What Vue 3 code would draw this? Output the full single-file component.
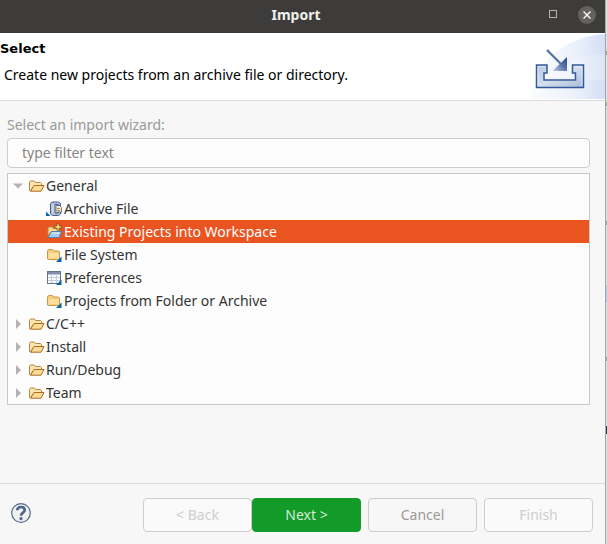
<script setup>
import { ref } from 'vue'

const filter = ref('')
const selected = ref('Existing Projects into Workspace')
const rows = [
  { label: 'General', icon: 'open', level: 0, expanded: true },
  { label: 'Archive File', icon: 'archive', level: 1 },
  { label: 'Existing Projects into Workspace', icon: 'project', level: 1 },
  { label: 'File System', icon: 'folder', level: 1 },
  { label: 'Preferences', icon: 'table', level: 1 },
  { label: 'Projects from Folder or Archive', icon: 'folder', level: 1 },
  { label: 'C/C++', icon: 'open', level: 0 },
  { label: 'Install', icon: 'open', level: 0 },
  { label: 'Run/Debug', icon: 'open', level: 0 },
  { label: 'Team', icon: 'open', level: 0 },
]
</script>

<template>
  <div class="screen">
    <main class="dialog">
      <header class="titlebar">
        <span></span>
        <h1>Import</h1>
        <div class="window-buttons">
          <button class="win" type="button" aria-label="Maximize">
            <svg width="9" height="9" viewBox="0 0 9 9"><rect x="0.5" y="0.5" width="7" height="7" fill="none" stroke="#b4b2ac" /></svg>
          </button>
          <button class="win close" type="button" aria-label="Close">
            <svg width="8" height="8" viewBox="0 0 8 8"><path d="M0.5 0.5 7.5 7.5M7.5 0.5 0.5 7.5" stroke="#f4f3f0" stroke-width="1.5" /></svg>
          </button>
        </div>
      </header>

      <section class="banner">
        <div class="banner-text">
          <h2>Select</h2>
          <p>Create new projects from an archive file or directory.</p>
        </div>
        <svg class="banner-art" width="75" height="66" viewBox="0 0 75 66" aria-hidden="true">
          <defs>
            <linearGradient id="sky" x1="0" y1="0" x2="1" y2="0">
              <stop offset="0" stop-color="#fbfcfe" /><stop offset="0.6" stop-color="#ecf1fb" /><stop offset="1" stop-color="#d4dff5" />
            </linearGradient>
            <linearGradient id="tray" x1="0" y1="0" x2="1" y2="1">
              <stop offset="0" stop-color="#b9c9e2" /><stop offset="0.5" stop-color="#d3deee" /><stop offset="1" stop-color="#a9bbd8" />
            </linearGradient>
            <linearGradient id="head" x1="0" y1="1" x2="1" y2="0">
              <stop offset="0" stop-color="#c3cfe3" /><stop offset="0.55" stop-color="#5273a8" /><stop offset="1" stop-color="#23488a" />
            </linearGradient>
          </defs>
          <path d="M0 66C3 34 30 4 75 1V66Z" fill="url(#sky)" />
          <path d="M0 66C14 35 40 24 75 21V48C45 44 20 51 0 66Z" fill="#fff" opacity="0.2" />
          <path d="M6.500 32H17V40H14V47H45.500V40H42.500V32H53.500V54.500H6.500Z" fill="url(#tray)" stroke="#34599a" stroke-width="1.500" />
          <path d="M8 53V33.500H15.500M44 33.500H52V53" fill="none" stroke="#fff" opacity="0.5" />
          <path d="M17 17 31 31" stroke="#a9bad5" stroke-width="2.600" />
          <path d="M17 17 31 31" stroke="#416397" stroke-width="1.500" />
          <path d="M37 24V38H22.500Z" fill="url(#head)" />
        </svg>
      </section>

      <section class="content">
        <label for="filter">Select an import wizard:</label>
        <input id="filter" v-model="filter" type="text" placeholder="type filter text" />
        <ul class="tree" role="tree" aria-label="Import wizards">
          <li
            v-for="row in rows"
            :key="row.label"
            role="treeitem"
            :class="['row', { child: row.level, selected: selected === row.label }]"
            :aria-selected="selected === row.label"
            @click="selected = row.label"
          >
            <svg v-if="!row.level" class="arrow" width="10" height="10" viewBox="0 0 10 10" aria-hidden="true">
              <path :d="row.expanded ? 'M0 2.500H10L5 7.500Z' : 'M3 0 8 5 3 10Z'" fill="#b3b3b1" />
            </svg>
            <svg class="icon" width="16" height="16" viewBox="0 0 16 16" aria-hidden="true">
              <g v-if="row.icon === 'open'">
                <path d="M.5 12.500V4.500L1.500 3H5.500L6.500 4.500H11.500L12.500 5.500V8H5L1.500 13Z" fill="#fbe6af" stroke="#bd8640" />
                <path d="M1.500 13.200 5 7.500H15L12 13.200Z" fill="#fbdc97" stroke="#ad6b20" stroke-linejoin="round" />
              </g>
              <g v-else-if="row.icon === 'folder'">
                <path d="M.5 12V4L1.500 2.500H5.500L6.500 4H11.500L12.500 5V12L11.500 12.500H1.500Z" fill="#f6cf7d" stroke="#c9974a" />
                <path d="M1.500 11.500V6H12V11.500Z" fill="#fbdf9c" />
                <path d="M9 15H14.500V9.500Z" fill="#0b64a8" />
              </g>
              <g v-else-if="row.icon === 'project'">
                <path d="M1 12V4L2 3H5.500L6.500 4.500H12V8H4Z" fill="#f8d98f" stroke="#bd8b3c" />
                <path d="M1 13.500 4.500 7.500H14.500L12 13.500Z" fill="#a5cdf4" stroke="#4b83bd" />
                <path d="M4.500 9H13" stroke="#e3f3ff" />
                <path d="M11 -.5V6.500M7.500 3H14.500" stroke="#7c5519" stroke-width="3" />
                <path d="M11 .3V5.700M8.300 3H13.700" stroke="#ffe58d" stroke-width="1.400" />
              </g>
              <g v-else-if="row.icon === 'table'">
                <rect x=".5" y="1.500" width="13" height="12" fill="#f9fbfd" stroke="#66748e" />
                <path d="M1 2H13V4.500H1Z" fill="#8090ac" />
                <path d="M1 7.500H13M1 10.500H13M4.500 4.500V13M9.500 4.500V13" stroke="#c3cddb" />
                <path d="M9 15H14.500V9.500Z" fill="#0b64a8" />
              </g>
              <g v-else>
                <path d="M9 4.500H12.500L14.500 6.500V11.500H9Z" fill="#f6edcf" stroke="#76808f" />
                <path d="M5 1H11.500L13.500 2.500V4.500H11V3.500H8V12H11V11H13.500V13L11.500 14.500H5.500L3.500 13V2.500Z" fill="#aebfda" stroke="#4a618b" />
                <path d="M6 3V12.500" stroke="#e2eaf5" />
                <path d="M10 7.500H13M10 9.500H13" stroke="#b58e3a" />
                <path d="M-1 10.500V15H3.500Z" fill="#0b64a8" />
              </g>
            </svg>
            <span>{{ row.label }}</span>
          </li>
        </ul>
      </section>

      <footer class="footer">
        <button class="help" type="button" aria-label="Help">
          <svg width="20" height="20" viewBox="0 0 20 20">
            <circle cx="10" cy="10" r="9.300" fill="#f0f0ef" stroke="#536a91" stroke-width="1.200" />
            <path d="M6.200 7.200C6.200 3 13.700 3 13.700 7.200C13.700 9.700 10 9.500 10 12.700" fill="none" stroke="#4c628a" stroke-width="2.600" />
            <circle cx="10" cy="15.600" r="1.600" fill="#4c628a" />
          </svg>
        </button>
        <div class="actions">
          <div class="pair">
            <button class="btn" type="button" disabled>&lt; Back</button>
            <button class="btn next" type="button">Next &gt;</button>
          </div>
          <button class="btn cancel" type="button">Cancel</button>
          <button class="btn" type="button" disabled>Finish</button>
        </div>
      </footer>
    </main>
    <div class="behind" aria-hidden="true">
      <i class="mark one"></i><i class="mark two"></i><i class="mark three"></i>
      <i class="mark band"></i><i class="mark four"></i><i class="mark dark"></i>
    </div>
  </div>
</template>

<style>
body { margin: 0; background: #f6f6f6; }
</style>

<style scoped>
* { box-sizing: border-box; }
.screen {
  display: flex;
  min-height: 100vh;
  font-family: "Noto Sans", "Open Sans", sans-serif;
  font-size: 14px;
  line-height: 20px;
  color: #343434;
}
.dialog {
  flex: 1;
  min-width: 0;
  display: flex;
  flex-direction: column;
  background: #f7f7f7;
}
h1, h2, p { margin: 0; font-size: 14px; }
button { font: inherit; padding: 0; border: 0; background: none; }
.titlebar {
  height: 33px;
  display: grid;
  grid-template-columns: 1fr auto 1fr;
  align-items: center;
  padding: 0 9px 4px 0;
  background: #3d3c3a;
  color: #f1f0ee;
}
.titlebar h1 { padding-right: 4px; }
.window-buttons { display: flex; justify-content: flex-end; align-items: center; gap: 16px; }
.win { display: flex; align-items: center; justify-content: center; width: 18px; height: 18px; }
.close { border-radius: 50%; background: #64625f; }
.banner {
  display: flex;
  justify-content: space-between;
  height: 68px;
  background: #fff;
  border-bottom: 1px solid #dadada;
  color: #000;
}
.banner-text { display: flex; flex-direction: column; gap: 6px; padding-top: 6px; }
.banner-text h2 { font-family: "DejaVu Sans", sans-serif; font-size: 13px; }
.banner-text p { padding-left: 4px; }
.banner-art { flex: none; }
.content { display: flex; flex-direction: column; padding: 14px 15px 0 7px; }
.content label { color: #9a9a98; padding-bottom: 3px; }
#filter {
  width: 100%;
  height: 30px;
  padding: 0 14px 2px;
  border: 1px solid #cdcdcd;
  border-radius: 4px;
  background: #fdfdfd;
  font: inherit;
  color: #343434;
  outline: 0;
}
#filter::placeholder { color: #858583; opacity: 1; }
.tree {
  list-style: none;
  margin: 5px 0 0;
  padding: 0;
  border: 1px solid #c9c9c9;
  background: #fdfdfd;
}
.row { display: flex; align-items: center; height: 23px; padding-left: 5px; white-space: nowrap; }
.row.child { padding-left: 39px; }
.arrow { flex: none; margin-right: 6px; }
.icon { flex: none; margin-right: 1px; overflow: visible; }
.selected { background: #e95420; color: #fff; }
.footer {
  margin-top: auto;
  display: flex;
  align-items: flex-start;
  justify-content: space-between;
  height: 61px;
  padding: 14px 12px 0 11px;
  border-top: 1px solid #dadada;
}
.help { display: flex; padding-top: 5px; }
.actions { display: flex; gap: 7px; }
.pair { display: flex; }
.btn {
  width: 109px;
  height: 34px;
  border: 1px solid #cdcdcd;
  border-radius: 4px;
  background: #fafafa;
  color: #cfcfcd;
}
.cancel { background: #f7f7f7; color: #9a9a98; }
.next { background: #129b28; border-color: #129b28; color: #d2ecd5; }
.behind {
  position: relative;
  width: 2px;
  background: #e4e4e4;
  border-left: 1px solid #a5a5a5;
}
.mark { position: absolute; left: 0; width: 1px; height: 4px; background: #9ca58a; }
.one { top: 51px; }
.two { top: 102px; }
.three { top: 221px; }
.band { top: 285px; height: 17px; background: #c3c9df; }
.four { top: 357px; }
.dark { top: 426px; height: 8px; background: #3a3444; }
</style>
